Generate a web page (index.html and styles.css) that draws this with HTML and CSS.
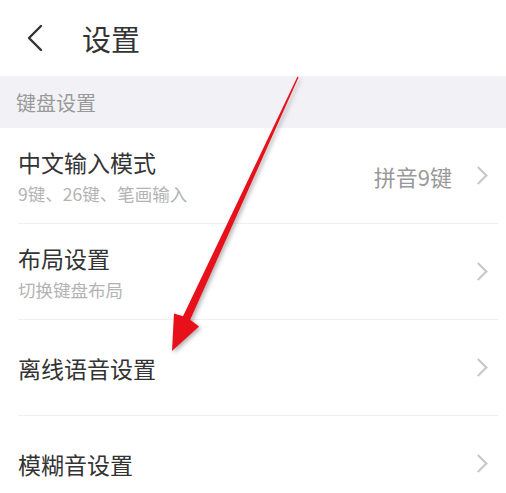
FILE: index.html
```html
<!DOCTYPE html>
<html lang="zh-CN">
<head>
    <meta charset="UTF-8">
    <meta name="viewport" content="width=device-width, initial-scale=1.0">
    <title>设置</title>
    <link rel="stylesheet" href="styles.css">
</head>
<body>
<div class="page">
    <div class="top-bar">
        <svg class="back-icon" width="18" height="28" viewBox="0 0 18 28">
            <path d="M15 2 L3 14 L15 26" fill="none" stroke="#333" stroke-width="2.4" stroke-linecap="round" stroke-linejoin="round"/>
        </svg>
        <h1>设置</h1>
    </div>

    <div class="section-title">键盘设置</div>

    <div class="setting-list">
        <div class="setting-row">
            <div class="setting-text">
                <div class="setting-name">中文输入模式</div>
                <div class="setting-desc">9键、26键、笔画输入</div>
            </div>
            <span class="setting-value">拼音9键</span>
            <span class="chevron"></span>
        </div>
        <div class="setting-row">
            <div class="setting-text">
                <div class="setting-name">布局设置</div>
                <div class="setting-desc">切换键盘布局</div>
            </div>
            <span class="chevron"></span>
        </div>
        <div class="setting-row">
            <div class="setting-text">
                <div class="setting-name">离线语音设置</div>
            </div>
            <span class="chevron"></span>
        </div>
        <div class="setting-row">
            <div class="setting-text">
                <div class="setting-name">模糊音设置</div>
            </div>
            <span class="chevron"></span>
        </div>
    </div>

    <!-- annotation arrow drawn over the screenshot -->
    <svg class="pointer-arrow" width="506" height="493" viewBox="0 0 506 493">
        <polygon points="298.6,77.3 190.2,319.7 199,326.5 172,351 174,313.5 183,316.3 297.4,76.7" fill="#e8101a"/>
    </svg>
</div>
</body>
</html>
```

FILE: styles.css
```css
:root {
    --text: #333;
    --text-secondary: #999;
    --text-light: #b3b3b3;
    --section-bg: #f2f2f6;
    --divider: #f0f0f0;
}

* {
    margin: 0;
    padding: 0;
    box-sizing: border-box;
    font-family: 'Noto Sans CJK SC', 'Noto Sans', sans-serif;
}

body {
    background-color: #fff;
    color: var(--text);
}

.page {
    position: relative;
    width: 506px;
    height: 493px;
    overflow: hidden;
}

.top-bar {
    height: 76px;
    display: flex;
    align-items: center;
    padding-left: 26px;
}

.back-icon {
    display: block;
    margin-right: 38px;
}

.top-bar h1 {
    font-size: 29px;
    font-weight: 400;
    line-height: 36px;
    color: var(--text);
}

.section-title {
    height: 52px;
    display: flex;
    align-items: center;
    padding-left: 16px;
    background-color: var(--section-bg);
    font-size: 20px;
    color: var(--text-secondary);
}

.setting-row {
    height: 96px;
    margin: 0 8px 0 18px;
    padding-right: 10px;
    display: flex;
    align-items: center;
    border-bottom: 1px solid var(--divider);
}

.setting-text {
    flex: 1;
}

.setting-name {
    font-size: 23px;
    line-height: 30px;
    color: var(--text);
}

.setting-desc {
    margin-top: 7px;
    font-size: 17.5px;
    line-height: 20px;
    color: var(--text-light);
}

.setting-value {
    font-size: 22px;
    color: var(--text-secondary);
    margin-right: 20px;
}

.chevron {
    width: 13px;
    height: 13px;
    border-top: 2px solid #c8c8c8;
    border-right: 2px solid #c8c8c8;
    transform: rotate(45deg);
    margin-right: 3px;
}

.pointer-arrow {
    position: absolute;
    top: 0;
    left: 0;
    filter: drop-shadow(2px 2px 2px rgba(0, 0, 0, 0.3));
}
```
